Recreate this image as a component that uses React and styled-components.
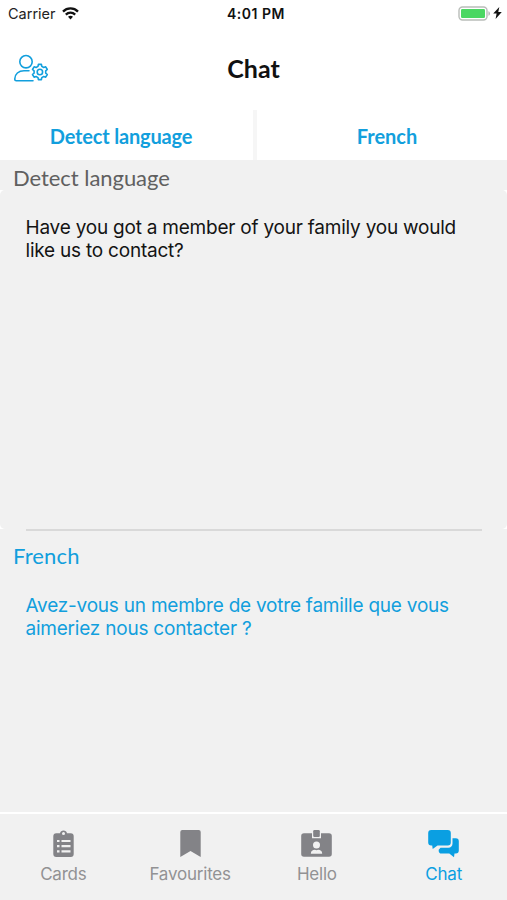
import React, { useState } from 'react'
import styled, { createGlobalStyle } from 'styled-components'

const BLUE = '#129fdd'

const GlobalStyle = createGlobalStyle`
  * {
    box-sizing: border-box;
  }

  body {
    margin: 0;
    background: #fff;
    font-family: Inter, 'Liberation Sans', sans-serif;
  }
`

const Screen = styled.div`
  width: 507px;
  height: 900px;
  display: flex;
  flex-direction: column;
  overflow: hidden;
  background: #fff;
`

const StatusBar = styled.div`
  height: 28px;
  display: grid;
  grid-template-columns: 1fr auto 1fr;
  align-items: center;
  padding: 0 5px 2px 8px;
  font-size: 14.5px;
  color: #222;
`

const StatusGroup = styled.div`
  display: flex;
  align-items: center;
  gap: ${(props) => props.$gap}px;
  justify-content: ${(props) => (props.$end ? 'flex-end' : 'flex-start')};
`

const Clock = styled.span`
  padding-left: 2px;
  font-size: 14px;
  font-weight: 600;
  letter-spacing: 0.5px;
  color: #111;
`

const NavBar = styled.header`
  height: 82px;
  display: grid;
  grid-template-columns: 60px 1fr 60px;
  align-items: center;
`

const ProfileButton = styled.button`
  display: flex;
  padding: 0 0 0 13px;
  border: 0;
  background: none;
`

const Title = styled.h1`
  margin: 0;
  padding-bottom: 2px;
  font: 700 25px/30px Lato, sans-serif;
  text-align: center;
  color: #111;
`

const Languages = styled.div`
  height: 50px;
  display: grid;
  grid-template-columns: 253px 4px 1fr;
`

const LanguageButton = styled.button`
  padding: ${(props) => (props.$first ? '2px 11px 0 0' : '2px 0 0 10px')};
  border: 0;
  background: none;
  font: 700 20px/24px Lato, sans-serif;
  letter-spacing: ${(props) => (props.$first ? '-0.17px' : '0')};
  color: ${BLUE};
`

const LanguageDivider = styled.div`
  background: #f6f6f6;
`

const SectionLabel = styled.h2`
  height: ${(props) => props.$height}px;
  margin: 0;
  padding: ${(props) => props.$top}px 13px 0;
  font: 400 22px/26px Lato, sans-serif;
  letter-spacing: ${(props) => props.$spacing}px;
  background: #f1f1f1;
  color: ${(props) => props.$color};
`

const SourceText = styled.div`
  height: 339px;
  padding: 26px 26px 0 25.5px;
  border-radius: 5px;
  background: #f1f1f1;
  font-size: 19px;
  line-height: 23.3px;
  letter-spacing: -0.22px;
  white-space: pre-line;
  color: #141414;
`

const Translation = styled.section`
  flex: 1;
  background: #f1f1f1;
`

const Rule = styled.div`
  height: 2px;
  margin: 0 25px 0 26px;
  background: #d9d9d9;
`

const TranslatedText = styled.div`
  padding: 22px 26px 0 25.5px;
  font-size: 19px;
  line-height: 23.3px;
  letter-spacing: -0.22px;
  white-space: pre-line;
  color: ${BLUE};
`

const TabBar = styled.nav`
  height: 88px;
  display: grid;
  grid-template-columns: repeat(4, 1fr);
  border-top: 2px solid #fff;
  background: #f1f1f1;
`

const Tab = styled.button`
  display: flex;
  flex-direction: column;
  align-items: center;
  gap: 4px;
  padding: 15px 0 0;
  border: 0;
  background: none;
  font: 400 17px/24px Inter, sans-serif;
  letter-spacing: -0.2px;
  color: ${(props) => (props.$active ? '#0a9fe2' : '#929294')};
`

const TabIcon = styled.svg`
  display: block;
  color: ${(props) => (props.$active ? '#0a9fe2' : '#838387')};
`

const WifiIcon = () => (
  <svg width="17" height="13" viewBox="0 0 17 13" fill="none" stroke="#111" strokeWidth="2.3">
    <path d="M1 4.6C5.2.4 11.8.4 16 4.6" />
    <path d="M3.8 7.6c2.7-2.6 6.7-2.6 9.4 0" />
    <path d="M6 9.8c1.5-1.3 3.5-1.3 5 0L8.5 12.4z" fill="#111" stroke="none" />
  </svg>
)

const BatteryIcon = () => (
  <svg width="33" height="15" viewBox="0 0 33 15">
    <rect x="1" y="1" width="28" height="13" rx="3.5" fill="#fff" stroke="#b9bdb9" strokeWidth="1.4" />
    <rect x="3" y="3" width="24" height="9" rx="1.2" fill="#4bd763" />
    <path d="M30.5 5.2c1.8.6 1.8 4 0 4.6z" fill="#aaa" />
  </svg>
)

const BoltIcon = () => (
  <svg width="9" height="12" viewBox="0 0 8 12" fill="#111" preserveAspectRatio="none">
    <path d="M5.6 0 .2 6.6h3L2.3 12 7.8 5H4.7z" />
  </svg>
)

const ProfileIcon = () => (
  <svg
    width="36"
    height="30"
    viewBox="0 0 36 30"
    fill="none"
    stroke={BLUE}
    strokeWidth="1.6"
    strokeLinejoin="round"
    strokeLinecap="round"
  >
    <circle cx="13" cy="7.7" r="6.2" />
    <path d="M16 16.7h-5c-5.4 0-9.2 3.4-9.2 8.1v.8c0 .8.5 1.200 1.400 1.200h16.800" />
    <path d="m25 12.400.400-2h3l.400 2 1.900 1.100 2-.700 1.600 2.700-1.600 1.400v2.200l1.600 1.400-1.600 2.700-2-.700-1.900 1.100-.400 2h-3l-.400-2-1.900-1.100-2 .700-1.600-2.700 1.600-1.400v-2.200l-1.600-1.400 1.600-2.700 2 .700z" />
    <circle cx="26.900" cy="18" r="2.700" />
  </svg>
)

const tabs = [
  {
    label: 'Cards',
    icon: (
      <>
        <path
          d="M8.300 4.200h3.700a3.600 3.600 0 0 1 7 0h3.700a3 3 0 0 1 3 3v17.700a3 3 0 0 1-3 3H8.300a3 3 0 0 1-3-3V7.200a3 3 0 0 1 3-3z"
          fill="currentColor"
        />
        <circle cx="15.500" cy="4.600" r="1.500" fill="#f1f1f1" />
        <path
          d="M9 12h2.500M9 17.200h2.500M9 22.400h2.500M13.500 12h9M13.500 17.200h9M13.500 22.400h9"
          stroke="#f1f1f1"
          strokeWidth="2.200"
        />
      </>
    ),
  },
  {
    label: 'Favourites',
    icon: <path d="M7.300 1h16.400a2 2 0 0 1 2 2v25l-10.200-6L5.300 28V3a2 2 0 0 1 2-2z" fill="currentColor" />,
  },
  {
    label: 'Hello',
    icon: (
      <>
        <path
          d="M3 4.300h8v4.900h9V4.300h8a2.800 2.800 0 0 1 2.800 2.800V25a2.800 2.800 0 0 1-2.800 2.800H3A2.800 2.800 0 0 1 .2 25V7.100A2.800 2.800 0 0 1 3 4.300z"
          fill="currentColor"
        />
        <rect x="12.200" y="1" width="6.600" height="6.900" rx="1.200" fill="currentColor" />
        <circle cx="15.500" cy="16" r="3.500" fill="#f1f1f1" />
        <path d="M9.800 24.800c0-3 2-4 4-4l1.700.5 1.700-.5c2 0 4 1 4 4z" fill="#f1f1f1" />
      </>
    ),
  },
  {
    label: 'Chat',
    icon: (
      <>
        <path
          d="M3.200 1h16.600a3 3 0 0 1 3 3v9.500a3 3 0 0 1-3 3H9.500l-4.800 3.400-.500-3.400h-1a3 3 0 0 1-3-3V4a3 3 0 0 1 3-3z"
          fill="currentColor"
        />
        <path
          d="M24.500 9.200h3.300a3 3 0 0 1 3 3v9.300a3 3 0 0 1-3 3h-1.300l-.500 3.800-4.700-3.800h-7.800a2.800 2.800 0 0 1-2.800-2.800v-1l1.800-2h7.800c2.600 0 4.200-1.700 4.200-4.200z"
          fill="currentColor"
        />
      </>
    ),
  },
]

const App = () => {
  const [active, setActive] = useState('Chat')

  return (
    <Screen>
      <GlobalStyle />
      <StatusBar>
        <StatusGroup $gap={6}>
          <span>Carrier</span>
          <WifiIcon />
        </StatusGroup>
        <Clock>4:01 PM</Clock>
        <StatusGroup $gap={2} $end>
          <BatteryIcon />
          <BoltIcon />
        </StatusGroup>
      </StatusBar>
      <NavBar>
        <ProfileButton aria-label="Profile settings">
          <ProfileIcon />
        </ProfileButton>
        <Title>Chat</Title>
      </NavBar>
      <Languages>
        <LanguageButton $first>Detect language</LanguageButton>
        <LanguageDivider />
        <LanguageButton>French</LanguageButton>
      </Languages>
      <SectionLabel $height={30} $top={5} $spacing={-0.05} $color="#606060">
        Detect language
      </SectionLabel>
      <SourceText>
        {'Have you got a member of your family you would\nlike us to contact?'}
      </SourceText>
      <Translation>
        <Rule />
        <SectionLabel $height={41} $top={12} $spacing={0.15} $color={BLUE}>
          French
        </SectionLabel>
        <TranslatedText>
          {'Avez-vous un membre de votre famille que vous\naimeriez nous contacter ?'}
        </TranslatedText>
      </Translation>
      <TabBar>
        {tabs.map((tab) => (
          <Tab key={tab.label} $active={tab.label === active} onClick={() => setActive(tab.label)}>
            <TabIcon width="31" height="29" viewBox="0 0 31 29" $active={tab.label === active}>
              {tab.icon}
            </TabIcon>
            {tab.label}
          </Tab>
        ))}
      </TabBar>
    </Screen>
  )
}

export default App
